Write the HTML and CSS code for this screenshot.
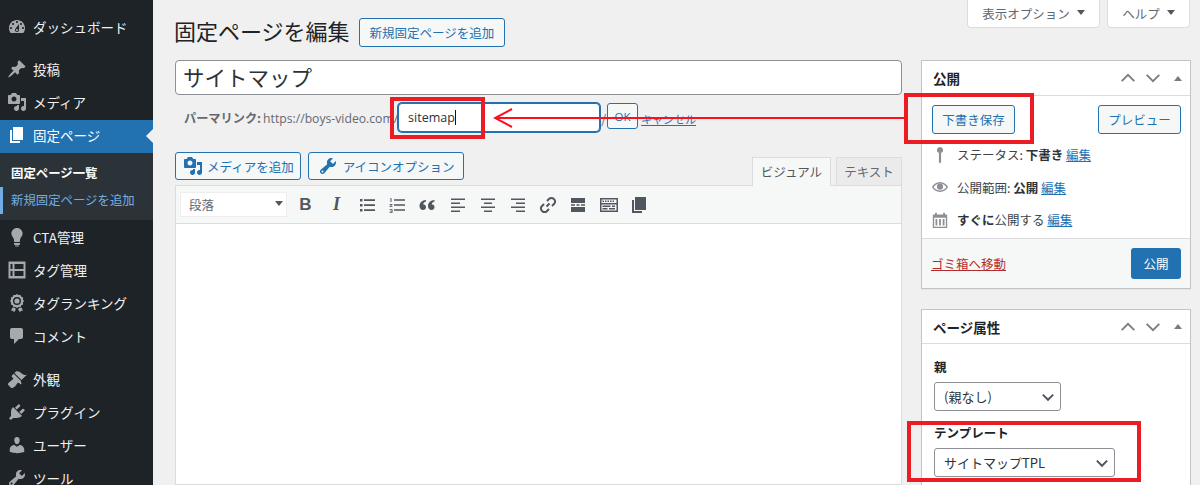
FILE: index.html
```html
<!DOCTYPE html>
<html lang="ja">
<head>
  <meta charset="utf-8">
  <title>固定ページを編集</title>
  <link rel="stylesheet" href="styles.css">
</head>
<body>
  <!-- Shared icons (dashicons style, 20x20 grid) -->
  <svg class="icon-defs">
    <symbol id="i-dashboard" viewBox="0 0 20 20"><path d="M3.76 16h12.48c1.1-1.37 1.76-3.11 1.76-5 0-4.42-3.58-8-8-8s-8 3.58-8 8c0 1.89.66 3.63 1.76 5zM10 4c.55 0 1 .45 1 1s-.45 1-1 1-1-.45-1-1 .45-1 1-1zM6 6c.55 0 1 .45 1 1s-.45 1-1 1-1-.45-1-1 .45-1 1-1zm8 0c.55 0 1 .45 1 1s-.45 1-1 1-1-.45-1-1 .45-1 1-1zm-5.37 5.55L12 7v6c0 1.1-.9 2-2 2s-2-.9-2-2c0-.57.24-1.08.63-1.45zM4 10c.55 0 1 .45 1 1s-.45 1-1 1-1-.45-1-1 .45-1 1-1zm12 0c.55 0 1 .45 1 1s-.45 1-1 1-1-.45-1-1 .45-1 1-1zm-5 3c0-.55-.45-1-1-1s-1 .45-1 1 .45 1 1 1 1-.45 1-1z"/></symbol>
    <symbol id="i-pin" viewBox="0 0 20 20"><path d="M10.44 3.02l1.82-1.82 6.36 6.35-1.83 1.82c-1.05-.68-2.48-.57-3.41.36l-.75.75c-.92.93-1.04 2.35-.35 3.41l-1.83 1.82-2.41-2.41-2.8 2.79c-.42.42-3.38 2.71-3.8 2.29s1.86-3.39 2.28-3.81l2.79-2.79L4.1 9.36l1.83-1.82c1.05.69 2.48.57 3.41-.36l.75-.75c.93-.92 1.04-2.35.35-3.41z"/></symbol>
    <symbol id="i-media" viewBox="0 0 20 20"><path d="M13 11V4c0-.55-.45-1-1-1h-1.67L9 1H5L3.67 3H2c-.55 0-1 .45-1 1v7c0 .55.45 1 1 1h10c.55 0 1-.45 1-1zM7 4.5c1.38 0 2.5 1.12 2.5 2.5S8.38 9.5 7 9.5 4.5 8.38 4.5 7 5.62 4.5 7 4.5zM14 6h5v10.5c0 1.38-1.12 2.5-2.5 2.5S14 17.88 14 16.5s1.12-2.5 2.5-2.5c.17 0 .34.02.5.05V9h-3V6zm-4 8.05V13h2v3.5c0 1.38-1.12 2.5-2.5 2.5S7 17.88 7 16.5 8.12 14 9.5 14c.17 0 .34.02.5.05z"/></symbol>
    <symbol id="i-page" viewBox="0 0 20 20"><path d="M6 15V2h10v13H6zm-1 1h8v2H3V5h2v11z"/></symbol>
    <symbol id="i-bulb" viewBox="0 0 20 20"><path d="M10 1c3.11 0 5.63 2.52 5.63 5.62 0 1.84-2.03 4.58-2.03 4.58-.33.44-.6 1.25-.6 1.8v1c0 .55-.45 1-1 1H8c-.55 0-1-.45-1-1v-1c0-.55-.27-1.36-.6-1.8 0 0-2.02-2.74-2.02-4.58C4.38 3.52 6.89 1 10 1zM7 16h6v.9c0 .6-.4 1.1-1.5 1.1h-3C7.4 18 7 17.5 7 16.9zM8 18.5h4c0 .55-.45 1-1 1H9c-.55 0-1-.45-1-1z"/></symbol>
    <symbol id="i-film" viewBox="0 0 20 20"><path fill-rule="evenodd" d="M1.500 1.500h17v17h-17zM3.500 4v5H5.500V4zM7.500 4v5h9V4zM3.500 11v5H5.500v-5zM7.500 11v5h9v-5z"/></symbol>
    <symbol id="i-award" viewBox="0 0 20 20"><path fill-rule="evenodd" d="M10 1l1.6 1.1 1.9-.2.8 1.8 1.8.8-.2 1.9L17 8l-1.1 1.6.2 1.9-1.8.8-.8 1.8-1.9-.2L10 15l-1.6-1.1-1.9.2-.8-1.8-1.8-.8.2-1.9L3 8l1.1-1.6-.2-1.9 1.8-.8.8-1.8 1.9.2zM10 4a4 4 0 1 0 0 8 4 4 0 0 0 0-8z"/><circle cx="10" cy="8" r="2.600"/><path d="M5.500 14.500l2 .3L9 16l-2 3.500-.9-1.800-2.100.1zM14.500 14.500l-2 .3L11 16l2 3.500.9-1.800 2.100.1z"/></symbol>
    <symbol id="i-comment" viewBox="0 0 20 20"><path d="M5 2h9c1.1 0 2 .9 2 2v7c0 1.1-.9 2-2 2h-2l-5 5v-5H5c-1.1 0-2-.9-2-2V4c0-1.1.9-2 2-2z"/></symbol>
    <symbol id="i-brush" viewBox="0 0 20 20"><path d="M14.48 11.06L7.41 3.99l1.5-1.5c.5-.56 2.3-.47 3.51.32 1.21.8 1.43 1.28 2.91 2.1 1.18.64 2.45 1.26 4.45.85zm-.71.71L6.7 4.7 4.93 6.47c-.39.39-.39 1.02 0 1.41l1.06 1.06c.39.39.39 1.03 0 1.42-.6.6-1.43 1.11-2.21 1.69-.35.26-.7.53-1.01.84C1.43 13.23.4 15.2 1.3 16.1l2.59 2.59c.9.9 2.87-.13 4.21-1.47.31-.31.58-.66.84-1.01.58-.78 1.09-1.61 1.69-2.21.39-.39 1.03-.39 1.42 0l1.06 1.06c.39.39 1.02.39 1.41 0z"/></symbol>
    <symbol id="i-plugin" viewBox="0 0 20 20"><path d="M13.11 4.36L9.87 7.6 8 5.73l3.24-3.24c.35-.34 1.05-.2 1.56.32.52.51.66 1.21.31 1.55zm-8 1.77l.91-1.12 9.01 9.01-1.19.84c-.71.71-2.63 1.16-3.82 1.16H6.14L4.9 17.26c-.59.59-1.54.59-2.12 0-.59-.58-.59-1.53 0-2.12l1.24-1.24v-3.88c0-1.13.4-3.19 1.09-3.89zm7.26 3.97l3.24-3.24c.34-.35 1.04-.21 1.55.31.52.51.66 1.21.31 1.55l-3.24 3.25z"/></symbol>
    <symbol id="i-user" viewBox="0 0 20 20"><path d="M10 9.25c-2.27 0-2.73-3.44-2.73-3.44C7 4.02 7.82 2 9.97 2c2.16 0 2.98 2.02 2.71 3.81 0 0-.41 3.44-2.68 3.44zm0 2.57L12.72 10c2.39 0 4.52 2.33 4.52 4.53v2.49s-3.65 1.13-7.24 1.13c-3.65 0-7.24-1.13-7.24-1.13v-2.49c0-2.25 1.94-4.48 4.47-4.48z"/></symbol>
    <symbol id="i-wrench" viewBox="0 0 20 20"><path d="M16.68 9.77c-1.34 1.34-3.3 1.67-4.95.99l-5.41 6.52c-.99.99-2.59.99-3.58 0s-.99-2.59 0-3.57l6.52-5.42c-.68-1.65-.35-3.61.99-4.95 1.28-1.28 3.12-1.62 4.72-1.06l-2.89 2.89 2.82 2.82 2.86-2.87c.53 1.58.18 3.39-1.08 4.65zM3.81 16.21c.4.39 1.04.39 1.43 0 .4-.4.4-1.04 0-1.43-.39-.4-1.03-.4-1.43 0-.39.39-.39 1.03 0 1.43z"/></symbol>
    <symbol id="i-chevron" viewBox="0 0 20 20"><path d="M3.500 7l6.500 6.500L16.500 7" fill="none" stroke="currentColor" stroke-width="2.400"/></symbol>
    <symbol id="i-up" viewBox="0 0 20 20"><path d="M3 13.500l7-7 7 7" fill="none" stroke="currentColor" stroke-width="2"/></symbol>
    <symbol id="i-down" viewBox="0 0 20 20"><path d="M3 6.500l7 7 7-7" fill="none" stroke="currentColor" stroke-width="2"/></symbol>
  </svg>

  <div class="layout">
    <!-- Admin menu -->
    <nav class="adminmenu">
      <ul class="menu-group first">
        <li><svg class="menu-icon"><use href="#i-dashboard"/></svg>ダッシュボード</li>
      </ul>
      <ul class="menu-group">
        <li><svg class="menu-icon"><use href="#i-pin"/></svg>投稿</li>
        <li><svg class="menu-icon"><use href="#i-media"/></svg>メディア</li>
        <li class="current"><svg class="menu-icon"><use href="#i-page"/></svg>固定ページ</li>
      </ul>
      <ul class="submenu">
        <li class="sub-current">固定ページ一覧</li>
        <li class="sub-active">新規固定ページを追加</li>
      </ul>
      <ul class="menu-group after-sub">
        <li><svg class="menu-icon"><use href="#i-bulb"/></svg>CTA管理</li>
        <li><svg class="menu-icon"><use href="#i-film"/></svg>タグ管理</li>
        <li><svg class="menu-icon"><use href="#i-award"/></svg>タグランキング</li>
        <li><svg class="menu-icon"><use href="#i-comment"/></svg>コメント</li>
      </ul>
      <ul class="menu-group lower">
        <li><svg class="menu-icon"><use href="#i-brush"/></svg>外観</li>
        <li><svg class="menu-icon"><use href="#i-plugin"/></svg>プラグイン</li>
        <li><svg class="menu-icon"><use href="#i-user"/></svg>ユーザー</li>
        <li><svg class="menu-icon"><use href="#i-wrench"/></svg>ツール</li>
      </ul>
    </nav>

    <main class="content">
      <div class="page-head">
        <div class="title-row">
          <h1>固定ページを編集</h1>
          <a class="btn">新規固定ページを追加</a>
        </div>
        <div class="screen-tabs">
          <div class="screen-tab tab-options">表示オプション<span class="tri"></span></div>
          <div class="screen-tab tab-help">ヘルプ<span class="tri"></span></div>
        </div>
      </div>

      <div class="columns">
        <!-- Editor column -->
        <div class="col-main">
          <input class="title-input" type="text" value="サイトマップ">
          <div class="permalink">
            <strong>パーマリンク:</strong>
            <span class="permalink-url">https://boys-video.com/</span>
            <div class="slug">sitemap<span class="caret"></span></div>
            <span class="slash">/</span>
            <a class="btn btn-ok">OK</a>
            <a class="link cancel">キャンセル</a>
          </div>

          <div class="editor-bar">
            <a class="btn btn-media"><svg class="btn-icon"><use href="#i-media"/></svg>メディアを追加</a>
            <a class="btn btn-media btn-options"><svg class="btn-icon"><use href="#i-wrench"/></svg>アイコンオプション</a>
            <div class="editor-tabs">
              <div class="editor-tab active">ビジュアル</div>
              <div class="editor-tab">テキスト</div>
            </div>
          </div>

          <div class="editor">
            <div class="toolbar">
              <div class="format-select">段落<span class="tri"></span></div>
              <span class="tool tool-b">B</span>
              <span class="tool tool-i">I</span>
              <svg class="tool-icon" viewBox="0 0 20 20"><path d="M3 4h2.500v2.500H3zM7 4.300h11v1.800H7zM3 9h2.500v2.500H3zM7 9.300h11v1.800H7zM3 14h2.500v2.500H3zM7 14.300h11v1.800H7z"/></svg>
              <svg class="tool-icon" viewBox="0 0 20 20"><path d="M7 4.300h11v1.500H7zM7 9.300h11v1.500H7zM7 14.300h11v1.500H7zM3.500 3h1v4h-1zM2.500 9h3v.8l-2 1.500h2v.7h-3v-.8l2-1.500h-2zM2.500 14h3v4h-3v-.7h2.200v-.9H3v-.7h1.700v-.9H2.500z"/></svg>
              <svg class="tool-icon" viewBox="0 0 20 20"><path d="M9 5v1.500C7 7.300 6.300 8 6.300 9.500 8 9.300 9 10.400 9 12c0 1.700-1.200 3-3 3-2.200 0-3.500-1.700-3.500-4 0-3.300 2.500-5.700 6.500-6zM17.500 5v1.500c-2 .8-2.700 1.500-2.700 3 1.700-.2 2.700.9 2.700 2.500 0 1.700-1.200 3-3 3-2.200 0-3.500-1.700-3.500-4 0-3.300 2.500-5.700 6.500-6z"/></svg>
              <svg class="tool-icon" viewBox="0 0 20 20"><path d="M3 3.500h14v1.600H3zM3 7.500h9v1.600H3zM3 11.500h14v1.600H3zM3 15.500h9v1.600H3z"/></svg>
              <svg class="tool-icon" viewBox="0 0 20 20"><path d="M3 3.500h14v1.600H3zM6 7.500h8v1.600H6zM3 11.500h14v1.600H3zM6 15.500h8v1.600H6z"/></svg>
              <svg class="tool-icon" viewBox="0 0 20 20"><path d="M3 3.500h14v1.600H3zM8 7.500h9v1.600H8zM3 11.500h14v1.600H3zM8 15.500h9v1.600H8z"/></svg>
              <svg class="tool-icon" viewBox="0 0 20 20"><path d="M8.500 11.500l3-3M9 6l2.200-2.200a3.100 3.100 0 0 1 4.400 0l.6.600a3.100 3.100 0 0 1 0 4.400L14 11M11 14l-2.200 2.200a3.100 3.100 0 0 1-4.400 0l-.6-.6a3.100 3.100 0 0 1 0-4.400L6 9" fill="none" stroke="currentColor" stroke-width="2"/></svg>
              <svg class="tool-icon" viewBox="0 0 20 20"><path d="M3 3h14v5H3zM3 9.200h4v1.600H3zM8.500 9.200h3v1.600h-3zM13 9.200h4v1.600h-4zM3 12h14v5H3z"/></svg>
              <svg class="tool-icon" viewBox="0 0 20 20"><path fill-rule="evenodd" d="M1 3h18v14H1zM2.500 4.500v3.500h15V4.500zM2.500 9.500v6h15v-6z"/><path d="M3.500 5.500h1.500v1.500H3.500zM6 5.500h1.500v1.500H6zM8.500 5.500H10v1.500H8.500zM11 5.500h1.500v1.500H11zM13.500 5.500H15v1.500h-1.500zM3.500 10.500h8v1.500h-8zM13 10.500h3v1.500h-3zM3.500 13h5v1.500h-5zM10 13h6v1.500h-6z"/></svg>
              <svg class="tool-icon" viewBox="0 0 20 20"><path d="M6 2h11v13H6zM5 16h8v2H3V5h2z"/></svg>
            </div>
            <div class="editor-body"></div>
          </div>
        </div>

        <!-- Side column -->
        <div class="col-side">
          <section class="postbox box-publish">
            <header class="postbox-head">
              <h2>公開</h2>
              <div class="handles">
                <svg class="handle"><use href="#i-up"/></svg>
                <svg class="handle"><use href="#i-down"/></svg>
                <span class="tri tri-up"></span>
              </div>
            </header>
            <div class="publish-actions">
              <a class="btn btn-tall">下書き保存</a>
              <a class="btn btn-tall">プレビュー</a>
            </div>
            <div class="pub-row">
              <svg class="pub-icon" viewBox="0 0 20 20"><path fill-rule="evenodd" d="M10 1a3.400 3.400 0 0 1 1.200 6.600V18l-1.200 1.500L8.800 18V7.600A3.400 3.400 0 0 1 10 1z"/></svg>
              <span>ステータス: <b>下書き</b> <a class="link">編集</a></span>
            </div>
            <div class="pub-row">
              <svg class="pub-icon" viewBox="0 0 20 20"><path fill-rule="evenodd" d="M10 4.500c4 0 7.300 2.500 9 5.500-1.700 3-5 5.500-9 5.500S2.700 13 1 10c1.700-3 5-5.500 9-5.500zM10 6c-3 0-5.700 1.800-7.200 4 1.500 2.200 4.200 4 7.200 4s5.700-1.800 7.200-4c-1.500-2.200-4.200-4-7.200-4z"/><circle cx="10" cy="9.600" r="3.400"/></svg>
              <span>公開範囲: <b>公開</b> <a class="link">編集</a></span>
            </div>
            <div class="pub-row">
              <svg class="pub-icon" viewBox="0 0 20 20"><path fill-rule="evenodd" d="M2 4h2.500V2h2v2h7V2h2v2H18v15H2zM3.500 7.500V17.500h13V7.500z"/><path d="M5 9h2v7H5zM9 9h2v7H9zM13 9h2v7h-2z"/></svg>
              <span><b>すぐに</b>公開する <a class="link">編集</a></span>
            </div>
            <footer class="publish-foot">
              <a class="trash">ゴミ箱へ移動</a>
              <a class="btn-primary">公開</a>
            </footer>
          </section>

          <section class="postbox box-attrs">
            <header class="postbox-head">
              <h2>ページ属性</h2>
              <div class="handles">
                <svg class="handle"><use href="#i-up"/></svg>
                <svg class="handle"><use href="#i-down"/></svg>
                <span class="tri tri-up"></span>
              </div>
            </header>
            <div class="attrs-body">
              <p class="attr-label">親</p>
              <div class="select select-parent">(親なし)<svg class="select-arrow"><use href="#i-chevron"/></svg></div>
              <p class="attr-label attr-template">テンプレート</p>
              <div class="select select-template">サイトマップTPL<svg class="select-arrow"><use href="#i-chevron"/></svg></div>
            </div>
          </section>
        </div>
      </div>
    </main>
  </div>

  <!-- Red annotations drawn over the screenshot -->
  <div class="mark mark-slug"></div>
  <div class="mark mark-draft"></div>
  <div class="mark mark-template"></div>
  <svg class="arrow" width="416" height="24" viewBox="0 0 416 24">
    <path d="M415 12H2M19 3L2 12l17 9" fill="none" stroke="#ff0f1b" stroke-width="2"/>
  </svg>
</body>
</html>
```

FILE: styles.css
```css
/* Global */
* {
  box-sizing: border-box;
}
html, body {
  height: 100%;
}
body {
  margin: 0;
  height: 485px;
  overflow: hidden;
  position: relative;
  background-color: #f0f0f1;
  color: #3c434a;
  font-family: "Noto Sans CJK JP", "Open Sans", sans-serif;
  font-size: 13px;
}
ul {
  list-style: none;
  margin: 0;
  padding: 0;
}
h1, h2, p {
  margin: 0;
  font-weight: normal;
}
.icon-defs {
  display: none;
}
.layout {
  display: flex;
  height: 485px;
}

/* Admin menu */
.adminmenu {
  width: 153px;
  flex: none;
  background-color: #1d2327;
  color: #f0f0f1;
  font-size: 13.5px;
}
.menu-group {
  padding-top: 9.500px;
}
.menu-group.first {
  padding-top: 11px;
}
.menu-group.after-sub {
  padding-top: 1px;
}
.menu-group li {
  display: flex;
  align-items: center;
  height: 33px;
  padding: 0 0 2px 7px;
  white-space: nowrap;
  position: relative;
}
.menu-group.after-sub li,
.menu-group.lower li {
  padding-bottom: 0;
}
.menu-icon {
  width: 20px;
  height: 20px;
  margin-right: 6px;
  fill: #a7aaad;
  flex: none;
}
.menu-group li.current {
  background-color: #2271b1;
  color: #fff;
}
.menu-group li.current .menu-icon {
  fill: #fff;
}
.menu-group li.current::after {
  content: "";
  position: absolute;
  right: 0;
  top: 9px;
  border: 7px solid transparent;
  border-right-color: #f0f0f1;
  border-left-width: 0;
}
.submenu {
  background-color: #2c3338;
  height: 67px;
  padding-top: 7px;
  font-size: 12.4px;
}
.submenu li {
  height: 27px;
  line-height: 27px;
  padding-left: 11px;
  white-space: nowrap;
}
.sub-current {
  color: #fff;
  font-weight: bold;
}
.sub-active {
  color: #72aee6;
  box-shadow: inset 3px 0 0 #72aee6;
}

/* Page head */
.content {
  flex: 1;
  min-width: 0;
  padding: 0 9px 0 22px;
}
.page-head {
  display: flex;
  justify-content: space-between;
  height: 60px;
}
.title-row {
  display: flex;
  align-items: center;
  gap: 9px;
  height: 65px;
}
h1 {
  font-size: 22px;
  color: #1d2327;
  white-space: nowrap;
  margin: -6px 0 0 -1px;
}
.btn {
  display: inline-flex;
  align-items: center;
  justify-content: center;
  height: 29px;
  padding: 0 10px;
  border: 1px solid #2271b1;
  border-radius: 3px;
  background-color: #f6f7f7;
  color: #2271b1;
  font-size: 12.5px;
  white-space: nowrap;
}
.screen-tabs {
  display: flex;
  gap: 7px;
  margin-right: 1px;
}
.screen-tab {
  display: flex;
  align-items: center;
  justify-content: center;
  gap: 7px;
  height: 28px;
  background-color: #fff;
  border: 1px solid #dcdcde;
  border-top: none;
  border-radius: 0 0 4px 4px;
  color: #646970;
  font-size: 12.5px;
}
.tab-options {
  width: 133px;
}
.tab-help {
  width: 83px;
}
.tri {
  display: inline-block;
  width: 0;
  height: 0;
  border-left: 4px solid transparent;
  border-right: 4px solid transparent;
  border-top: 5px solid #50575e;
  margin-top: -3px;
}
.tri-up {
  border-top: none;
  border-bottom: 5px solid #787c82;
  margin: 0 0 0 5px;
}

/* Columns */
.columns {
  display: flex;
  gap: 19px;
}
.col-main {
  width: 727px;
  flex: none;
}
.col-side {
  width: 270px;
  flex: none;
}

/* Title and permalink */
.title-input {
  display: block;
  width: 100%;
  height: 35px;
  padding: 0 7px 2px;
  border: 1px solid #8c8f94;
  border-radius: 4px;
  background-color: #fff;
  color: #2c3338;
  font-family: inherit;
  font-size: 21.500px;
}
.permalink {
  display: flex;
  align-items: flex-start;
  height: 57px;
  padding: 8px 0 0 9px;
  color: #50575e;
  font-size: 12.5px;
  white-space: nowrap;
}
.permalink strong {
  color: #646970;
  font-size: 12.2px;
  line-height: 31px;
  margin-right: 2px;
}
.permalink-url {
  width: 135px;
  line-height: 31px;
  color: #646970;
  font-size: 12.2px;
  font-family: "Open Sans", sans-serif;
}
.slug {
  width: 202px;
  height: 29px;
  padding-left: 9px;
  line-height: 28px;
  border: 1px solid #2271b1;
  border-radius: 4px;
  box-shadow: 0 0 0 1px #2271b1;
  background-color: #fff;
  color: #2c3338;
  font-family: "Open Sans", sans-serif;
  font-size: 12.5px;
}
.caret {
  display: inline-block;
  width: 1px;
  height: 15px;
  background-color: #111;
  vertical-align: -3px;
}
.slash {
  width: 7px;
  text-align: center;
  line-height: 31px;
  color: #646970;
}
.btn-ok {
  width: 31px;
  height: 26px;
  padding: 0;
  margin-right: 3px;
  font-family: "Open Sans", sans-serif;
  font-size: 11.500px;
}
.link {
  color: #2271b1;
  text-decoration: underline;
}
.cancel {
  line-height: 32px;
  font-size: 11px;
}

/* Editor */
.editor-bar {
  display: flex;
  align-items: flex-end;
  gap: 7px;
  height: 33px;
}
.btn-media {
  height: 28px;
  margin-bottom: 5px;
  padding: 0 6px 0 7px;
  gap: 4px;
  font-size: 12.5px;
}
.btn-options {
  padding: 0 8px 0 9px;
  gap: 5px;
}
.btn-icon {
  width: 20px;
  height: 20px;
  fill: #2271b1;
}
.editor-tabs {
  display: flex;
  gap: 5px;
  margin-left: auto;
}
.editor-tab {
  width: 66px;
  height: 28px;
  line-height: 27px;
  text-align: center;
  border: 1px solid #dcdcde;
  border-bottom: none;
  background-color: #ebebeb;
  color: #646970;
  font-size: 12.5px;
}
.editor-tab.active {
  width: 79px;
  background-color: #f6f7f7;
  color: #50575e;
  height: 29px;
  margin-bottom: -1px;
  position: relative;
}
.editor {
  width: 727px;
  height: 300px;
  border: 1px solid #dcdcde;
  background-color: #fff;
}
.toolbar {
  display: flex;
  align-items: center;
  height: 38px;
  padding-left: 4px;
  background-color: #f6f7f7;
  border-bottom: 1px solid #dcdcde;
  color: #50575e;
}
.format-select {
  display: flex;
  align-items: center;
  justify-content: space-between;
  width: 107px;
  height: 25px;
  padding: 0 3px 0 8px;
  margin-right: 3px;
  background-color: #fff;
  border: 1px solid #eee;
  color: #646970;
  font-size: 12.5px;
}
.tool {
  width: 31px;
  text-align: center;
  font-size: 17px;
  font-family: "Liberation Sans", sans-serif;
  font-weight: bold;
  color: #50575e;
}
.tool-i {
  font-family: "Liberation Serif", serif;
  font-style: italic;
  font-size: 18px;
}
.tool-icon {
  width: 20px;
  height: 20px;
  margin: 0 5.1px;
  fill: currentColor;
}

/* Meta boxes */
.postbox {
  background-color: #fff;
  border: 1px solid #c3c4c7;
  box-shadow: 0 1px 1px rgba(0, 0, 0, 0.04);
}
.box-publish {
  height: 229px;
  margin-bottom: 20px;
}
.box-attrs {
  height: 200px;
}
.postbox-head {
  display: flex;
  align-items: center;
  justify-content: space-between;
  height: 35px;
  padding: 0 8px 0 11px;
  border-bottom: 1px solid #dcdcde;
}
.box-attrs .postbox-head {
  height: 34px;
}
.postbox-head h2 {
  font-size: 13.5px;
  font-weight: bold;
  color: #1d2327;
}
.handles {
  display: flex;
  align-items: center;
  gap: 7px;
}
.handle {
  width: 18px;
  height: 18px;
  color: #787c82;
}
.publish-actions {
  display: flex;
  justify-content: space-between;
  padding: 9px 9px 0 10px;
}
.publish-actions .btn {
  width: 83px;
  padding: 0;
}
.pub-row {
  display: flex;
  align-items: center;
  gap: 8px;
  height: 32.5px;
  padding: 0 0 1px 9px;
  font-size: 12.5px;
}
.publish-actions + .pub-row {
  margin-top: 5px;
}
.pub-row b {
  color: #2c3338;
}
.pub-icon {
  width: 18px;
  height: 18px;
  fill: #8c8f94;
  flex: none;
}
.publish-foot {
  display: flex;
  align-items: center;
  justify-content: space-between;
  height: 50px;
  margin-top: 1px;
  padding: 0 9px;
  background-color: #f6f7f7;
  border-top: 1px solid #dcdcde;
}
.trash {
  color: #b32d2e;
  text-decoration: underline;
  font-size: 12.5px;
}
.btn-primary {
  display: flex;
  align-items: center;
  justify-content: center;
  width: 50px;
  height: 31px;
  background-color: #2271b1;
  border-radius: 3px;
  color: #fff;
  font-size: 12.5px;
}
.attrs-body {
  padding: 14px 12px;
}
.attr-label {
  font-size: 12.5px;
  font-weight: bold;
  color: #1d2327;
  line-height: 18px;
  margin-bottom: 6px;
}
.attr-template {
  margin-top: 13px;
}
.select {
  display: flex;
  align-items: center;
  justify-content: space-between;
  height: 29px;
  padding: 0 4px 0 9px;
  border: 1px solid #8c8f94;
  border-radius: 3px;
  background-color: #fff;
  color: #2c3338;
  font-size: 13px;
}
.select-parent {
  width: 127px;
}
.select-template {
  width: 181px;
}
.select-arrow {
  width: 16px;
  height: 16px;
  color: #50575e;
}

/* Red annotations, these lie over the page */
.mark {
  position: absolute;
  border: 4px solid #ec1c24;
}
.mark-slug {
  left: 390px;
  top: 97px;
  width: 95px;
  height: 42px;
}
.mark-draft {
  left: 904px;
  top: 93px;
  width: 130px;
  height: 51px;
}
.mark-template {
  left: 907px;
  top: 421px;
  width: 234px;
  height: 61px;
}
.arrow {
  position: absolute;
  left: 493px;
  top: 106px;
}
```
